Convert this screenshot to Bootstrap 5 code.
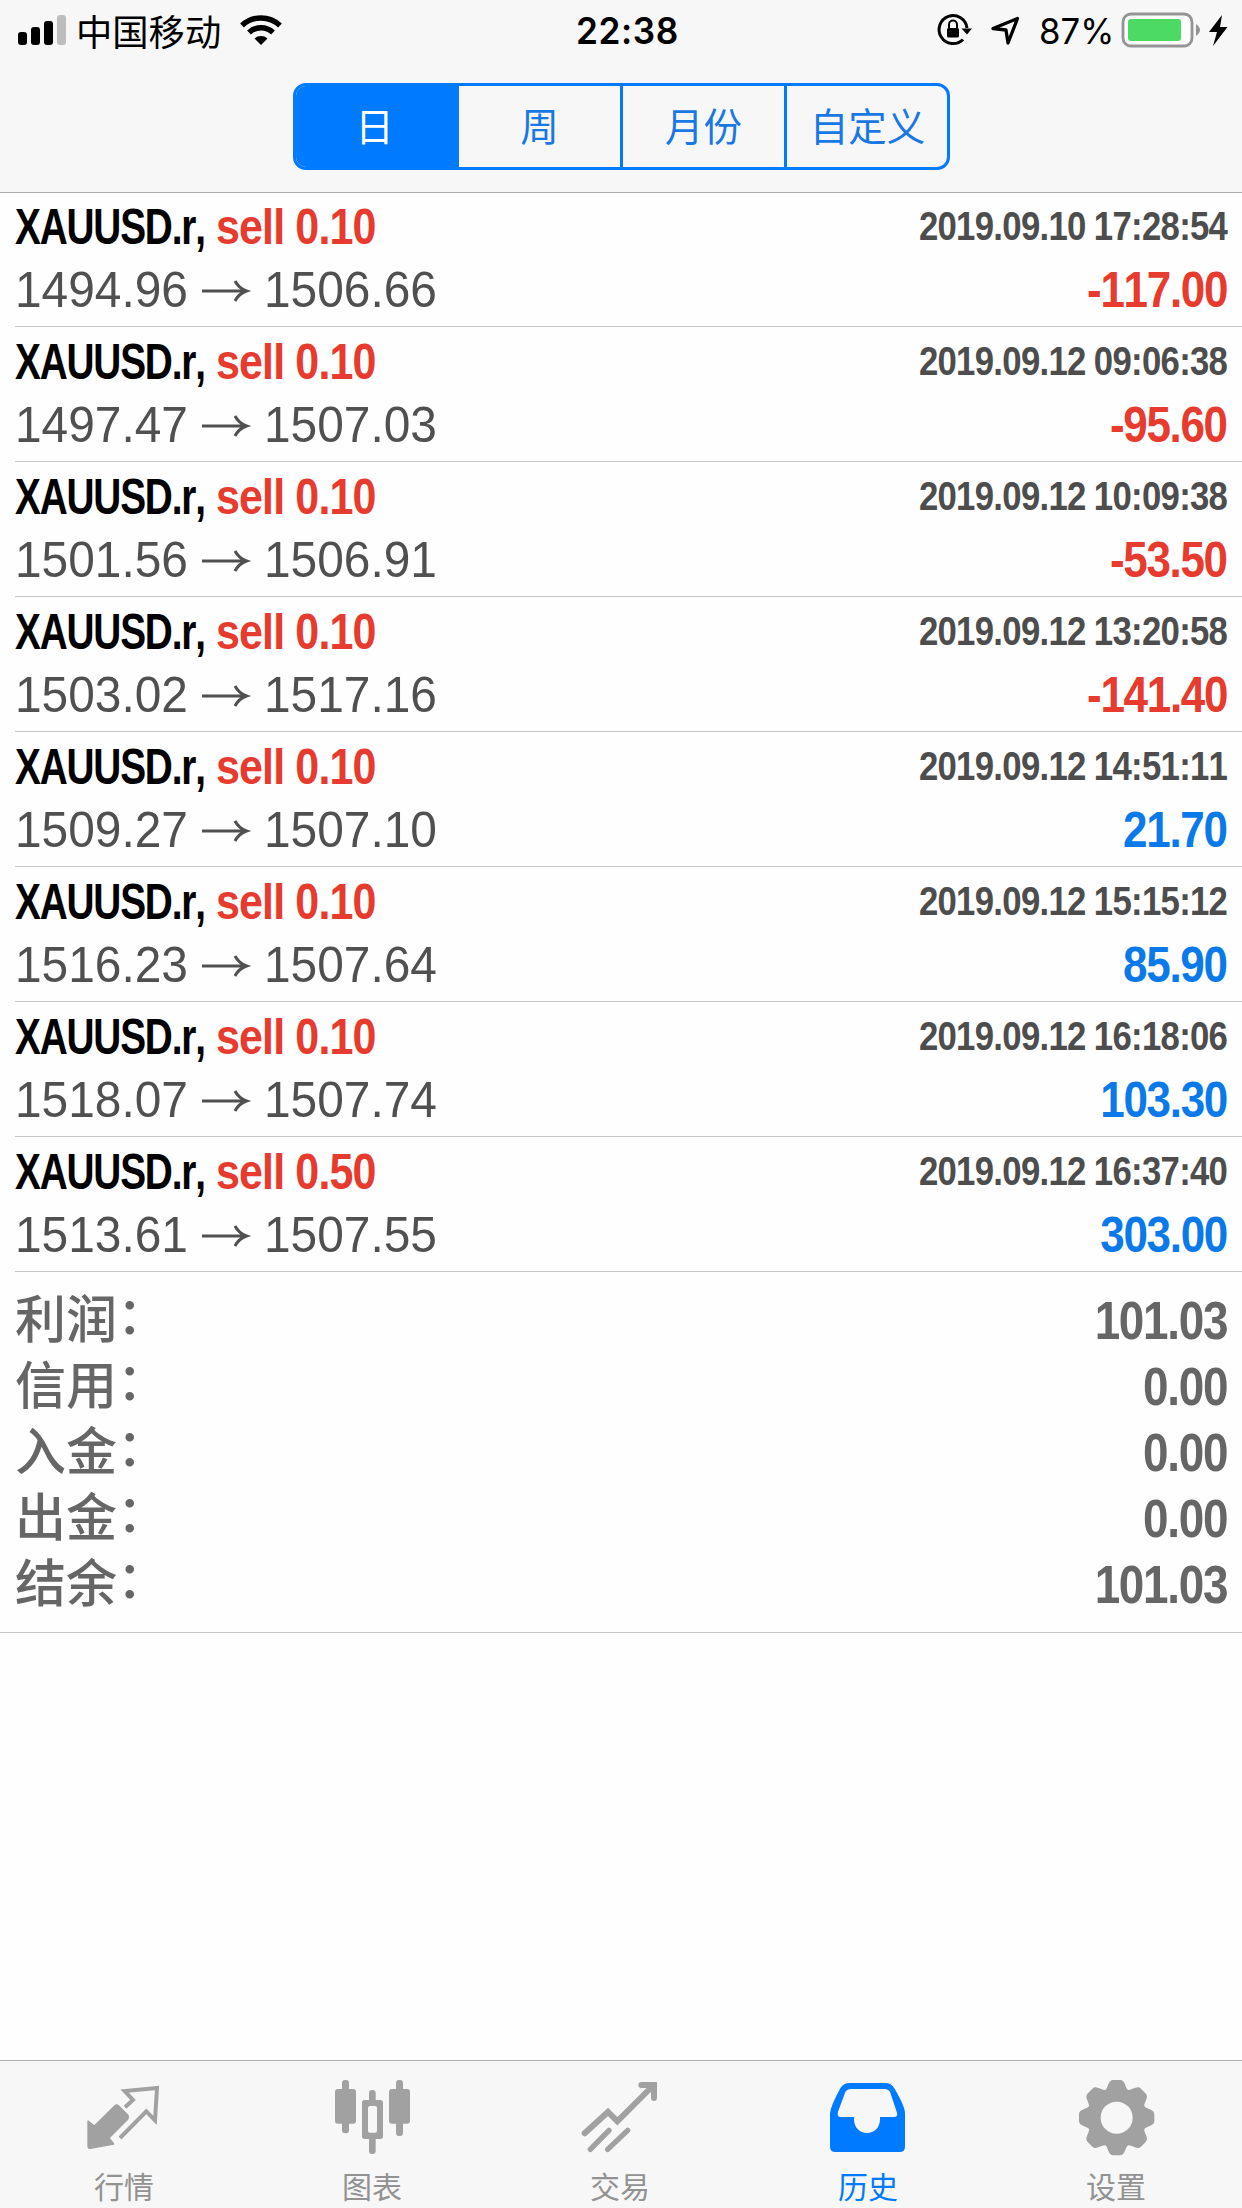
<!DOCTYPE html>
<html lang="zh-CN">
<head>
<meta charset="utf-8">
<meta name="viewport" content="width=device-width, initial-scale=1">
<title>历史</title>
<link rel="stylesheet" href="https://cdn.jsdelivr.net/npm/bootstrap@5.3.0/dist/css/bootstrap.min.css">
<style>
body{width:1242px;height:2208px;overflow:hidden;background:#fefefe;font-family:"Liberation Sans","Noto Sans CJK SC",sans-serif;color:#000}
.topbar{height:193px;background:#f7f7f7;border-bottom:1px solid #adadad;margin-bottom:-1px}
.status{height:83px;font-family:Inter,"Noto Sans CJK SC",sans-serif}
.status>*{flex:none}
.carrier{font:400 36.3px/60px "Noto Sans CJK SC",sans-serif;width:160px;margin-left:8px}
.clock{font-size:36.5px;font-weight:600;line-height:62px;width:465px;padding-left:338px;margin-left:-48px;white-space:nowrap}
.clock span{display:inline-block;letter-spacing:.6px;transform-origin:0 50%;transform:scaleX(.965)}
.status-icons{margin-left:219px}
.battery-text{font-size:36px;line-height:62px;font-weight:400;width:81px;white-space:nowrap}
.battery-text span{display:inline-block;transform-origin:0 50%;transform:translateX(-1px) scaleX(.965)}
.seg{width:657px;height:87px;border:3px solid #007aff;border-radius:13px;overflow:hidden}
.seg .btn{border-radius:0;border:0;border-left:3px solid #007aff;color:#1a78e4;font:400 38.5px/74px "Noto Sans CJK SC",sans-serif;padding:0 0 6px;flex:0 0 165px}
.seg .btn:first-child{border-left:0;flex-basis:161px;padding-right:3px}
.seg .btn.active{background:#007aff;color:#fff}
.deal{height:135px;margin-left:15px;padding:4px 15px 0 0;border-bottom:1px solid #c6c6c6}
.line-a{height:62px;line-height:62px}
.line-b{height:64px;line-height:64px}
.squeeze{display:inline-block;white-space:nowrap;transform-origin:0 50%;font-kerning:none}
.end{transform-origin:100% 50%}
.symbol{width:201px;font-size:50px;font-weight:700}
.symbol .squeeze{transform:scaleX(.775);letter-spacing:-1.5px}
.side{width:200px;font-size:50px;font-weight:700;color:#e63b2e}
.side .squeeze{transform:scaleX(.86);letter-spacing:-1px}
.stamp{font-size:40px;line-height:60px;font-weight:700;color:#4d4d4d}
.stamp .squeeze{transform:scaleX(.868);letter-spacing:-.8px;word-spacing:-1px}
.rate{font-size:50px;color:#505050}
.rate .squeeze{transform:scaleX(.957)}
.from{width:185px}
.arrow{width:64px;height:64px}
.profit{font-size:50px;font-weight:700;color:#0a7aeb}
.loss{color:#e63b2e}
.profit .squeeze{transform:scaleX(.88);letter-spacing:-1.5px}
.summary{padding:12px 15px 17px 15px;height:361px;border-bottom:1px solid #c6c6c6;color:#666}
.sum-line{height:66px;line-height:66px}
.sum-name{font:500 51px/64px "Noto Sans CJK SC",sans-serif}
.colon{display:inline-block;transform:translateY(-4px)}
.sum-value{font-size:53px;line-height:73px;font-weight:700}
.sum-value .squeeze{transform:scaleX(.865);letter-spacing:-1.5px}
.tabs{height:148px;background:#f7f7f7;border-top:1px solid #adadad;width:1242px;padding-right:2px}
.tabs .nav-link{flex:1 1 0;padding:9px 0 0;color:#929292;font:400 30px/44px "Noto Sans CJK SC",sans-serif}
.tabs .nav-link.active{color:#007aff}
.tabs svg{display:block;flex:none;width:100px;height:90px;fill:#a1a1a1;stroke:#a1a1a1}
.tabs .active svg{fill:#007aff;stroke:none}
.tab-label{margin-top:3px}
</style>
<script src="https://cdn.jsdelivr.net/npm/bootstrap@5.3.0/dist/js/bootstrap.bundle.min.js"></script>
</head>
<body class="d-flex flex-column">
<header class="topbar flex-shrink-0 position-relative">
  <div class="status d-flex align-items-start">
    <svg width="68" height="62" viewBox="0 0 68 62"><rect x="18" y="32" width="9" height="13" rx="3"/><rect x="31" y="27" width="9" height="18" rx="3"/><rect x="44" y="21" width="9" height="24" rx="3"/><rect x="57" y="15" width="9" height="30" rx="3" fill="#bdbdbd"/></svg>
    <div class="carrier">中国移动</div>
    <svg width="50" height="62" viewBox="236 0 50 62" fill="none" stroke="#000" stroke-width="5.5"><path d="M242 25.500a27.500 27.500 0 0 1 38 0M249 32.500a17.500 17.500 0 0 1 24 0"/><path d="M254.500 38.500a10 10 0 0 1 13 0L261 45z" fill="#000" stroke="none"/></svg>
    <div class="clock"><span>22:38</span></div>
    <svg class="status-icons" width="118" height="62" viewBox="922 0 118 62" fill="none" stroke="#000" stroke-width="3"><path d="M963 39.500A14 14 0 1 1 967 28"/><path d="M961.500 28.500h10.500l-5 6z" fill="#000" stroke="none"/><rect x="947" y="28" width="12" height="9.500" rx="1.500" fill="#000" stroke="none"/><path d="M949 28v-3.500a4 4 0 0 1 8 0V28" stroke-width="2"/><path d="M993 28.500L1017.500 18.500L1008 43L1006 30z" stroke-width="3.300" stroke-linejoin="round"/></svg>
    <div class="battery-text"><span>87%</span></div>
    <svg width="121" height="62" viewBox="1121 0 121 62"><rect x="1123" y="14" width="69" height="32" rx="8" fill="#fcfcfc" stroke="#949494" stroke-width="2.800"/><rect x="1128" y="19" width="53" height="22" rx="3" fill="#4cd964"/><path d="M1196 24q8 6 0 12z" fill="#949494"/><path d="M1222 15L1209 32H1217L1213 46L1227.500 27H1220z"/></svg>
  </div>
  <div class="seg btn-group d-flex mx-auto" role="group">
    <button class="btn active">日</button><button class="btn">周</button><button class="btn">月份</button><button class="btn">自定义</button>
  </div>
</header>
<svg class="d-none"><symbol id="to" viewBox="0 0 64 64"><path d="M2 33H46M35 23Q39 30.500 46.500 33Q39 35.500 35 43" fill="none" stroke="#505050" stroke-width="3"/></symbol></svg>
<main class="flex-grow-1">
  <section>
    <div class="deal">
      <div class="line-a d-flex"><div class="symbol"><span class="squeeze">XAUUSD.r,</span></div><div class="side"><span class="squeeze">sell 0.10</span></div><div class="stamp ms-auto"><span class="squeeze end">2019.09.10 17:28:54</span></div></div>
      <div class="line-b d-flex"><div class="rate from"><span class="squeeze">1494.96</span></div><svg class="arrow"><use href="#to"/></svg><div class="rate"><span class="squeeze">1506.66</span></div><div class="profit loss ms-auto"><span class="squeeze end">-117.00</span></div></div>
    </div>
    <div class="deal">
      <div class="line-a d-flex"><div class="symbol"><span class="squeeze">XAUUSD.r,</span></div><div class="side"><span class="squeeze">sell 0.10</span></div><div class="stamp ms-auto"><span class="squeeze end">2019.09.12 09:06:38</span></div></div>
      <div class="line-b d-flex"><div class="rate from"><span class="squeeze">1497.47</span></div><svg class="arrow"><use href="#to"/></svg><div class="rate"><span class="squeeze">1507.03</span></div><div class="profit loss ms-auto"><span class="squeeze end">-95.60</span></div></div>
    </div>
    <div class="deal">
      <div class="line-a d-flex"><div class="symbol"><span class="squeeze">XAUUSD.r,</span></div><div class="side"><span class="squeeze">sell 0.10</span></div><div class="stamp ms-auto"><span class="squeeze end">2019.09.12 10:09:38</span></div></div>
      <div class="line-b d-flex"><div class="rate from"><span class="squeeze">1501.56</span></div><svg class="arrow"><use href="#to"/></svg><div class="rate"><span class="squeeze">1506.91</span></div><div class="profit loss ms-auto"><span class="squeeze end">-53.50</span></div></div>
    </div>
    <div class="deal">
      <div class="line-a d-flex"><div class="symbol"><span class="squeeze">XAUUSD.r,</span></div><div class="side"><span class="squeeze">sell 0.10</span></div><div class="stamp ms-auto"><span class="squeeze end">2019.09.12 13:20:58</span></div></div>
      <div class="line-b d-flex"><div class="rate from"><span class="squeeze">1503.02</span></div><svg class="arrow"><use href="#to"/></svg><div class="rate"><span class="squeeze">1517.16</span></div><div class="profit loss ms-auto"><span class="squeeze end">-141.40</span></div></div>
    </div>
    <div class="deal">
      <div class="line-a d-flex"><div class="symbol"><span class="squeeze">XAUUSD.r,</span></div><div class="side"><span class="squeeze">sell 0.10</span></div><div class="stamp ms-auto"><span class="squeeze end">2019.09.12 14:51:11</span></div></div>
      <div class="line-b d-flex"><div class="rate from"><span class="squeeze">1509.27</span></div><svg class="arrow"><use href="#to"/></svg><div class="rate"><span class="squeeze">1507.10</span></div><div class="profit ms-auto"><span class="squeeze end">21.70</span></div></div>
    </div>
    <div class="deal">
      <div class="line-a d-flex"><div class="symbol"><span class="squeeze">XAUUSD.r,</span></div><div class="side"><span class="squeeze">sell 0.10</span></div><div class="stamp ms-auto"><span class="squeeze end">2019.09.12 15:15:12</span></div></div>
      <div class="line-b d-flex"><div class="rate from"><span class="squeeze">1516.23</span></div><svg class="arrow"><use href="#to"/></svg><div class="rate"><span class="squeeze">1507.64</span></div><div class="profit ms-auto"><span class="squeeze end">85.90</span></div></div>
    </div>
    <div class="deal">
      <div class="line-a d-flex"><div class="symbol"><span class="squeeze">XAUUSD.r,</span></div><div class="side"><span class="squeeze">sell 0.10</span></div><div class="stamp ms-auto"><span class="squeeze end">2019.09.12 16:18:06</span></div></div>
      <div class="line-b d-flex"><div class="rate from"><span class="squeeze">1518.07</span></div><svg class="arrow"><use href="#to"/></svg><div class="rate"><span class="squeeze">1507.74</span></div><div class="profit ms-auto"><span class="squeeze end">103.30</span></div></div>
    </div>
    <div class="deal">
      <div class="line-a d-flex"><div class="symbol"><span class="squeeze">XAUUSD.r,</span></div><div class="side"><span class="squeeze">sell 0.50</span></div><div class="stamp ms-auto"><span class="squeeze end">2019.09.12 16:37:40</span></div></div>
      <div class="line-b d-flex"><div class="rate from"><span class="squeeze">1513.61</span></div><svg class="arrow"><use href="#to"/></svg><div class="rate"><span class="squeeze">1507.55</span></div><div class="profit ms-auto"><span class="squeeze end">303.00</span></div></div>
    </div>
  </section>
  <section class="summary">
    <div class="sum-line d-flex justify-content-between"><div class="sum-name">利润<span class="colon">：</span></div><div class="sum-value"><span class="squeeze end">101.03</span></div></div>
    <div class="sum-line d-flex justify-content-between"><div class="sum-name">信用<span class="colon">：</span></div><div class="sum-value"><span class="squeeze end">0.00</span></div></div>
    <div class="sum-line d-flex justify-content-between"><div class="sum-name">入金<span class="colon">：</span></div><div class="sum-value"><span class="squeeze end">0.00</span></div></div>
    <div class="sum-line d-flex justify-content-between"><div class="sum-name">出金<span class="colon">：</span></div><div class="sum-value"><span class="squeeze end">0.00</span></div></div>
    <div class="sum-line d-flex justify-content-between"><div class="sum-name">结余<span class="colon">：</span></div><div class="sum-value"><span class="squeeze end">101.03</span></div></div>
  </section>
</main>
<nav class="tabs nav flex-nowrap flex-shrink-0">
  <a class="nav-link d-flex flex-column align-items-center">
    <svg viewBox="102 60 300 270"><path d="M144 213L163 228L224 168Q230 162 237 169L264 196Q268 202 263 208L207 264L221 282L151 295Q144 296 144 289z" stroke-width="4" stroke-linejoin="round"/><path d="M255 172L279 150L254 123L351 114L345 211L319 184L240 264" fill="none" stroke-width="12"/></svg>
    <span class="tab-label">行情</span></a>
  <a class="nav-link d-flex flex-column align-items-center">
    <svg viewBox="846 60 300 270"><g stroke="none"><rect x="885" y="117" width="63" height="104" rx="9"/><rect x="906" y="90" width="21" height="160" rx="9"/><rect x="1047" y="117" width="63" height="104" rx="9"/><rect x="1068" y="90" width="21" height="168" rx="9"/><rect x="987" y="120" width="20" height="192" rx="9"/><rect x="966" y="150" width="63" height="117" rx="8"/><rect x="984" y="168" width="27" height="80" rx="6" fill="#f7f7f7"/></g></svg>
    <span class="tab-label">图表</span></a>
  <a class="nav-link d-flex flex-column align-items-center">
    <svg viewBox="90 60 300 270"><g fill="none" stroke-width="16" stroke-linecap="round"><path d="M134 250L204 186L232 214L338 108M304 105H342V144" stroke-width="18"/><path d="M151 298L207 241M203 298L263 241"/></g></svg>
    <span class="tab-label">交易</span></a>
  <a class="nav-link active d-flex flex-column align-items-center">
    <svg viewBox="834 60 300 270"><path fill-rule="evenodd" d="M930 99H1036Q1054 99 1063 115Q1095 170 1095 190V290Q1095 306 1079 306H886Q870 306 870 290V190Q872 168 901 115Q910 99 930 99zM933 117Q921 117 916 126L894 185Q890 201 902 201H942V208C942 234 960 249 981 249C1002 249 1020 234 1020 208V201H1061Q1076 201 1070 185L1051 128Q1047 117 1033 117z"/></svg>
    <span class="tab-label">历史</span></a>
  <a class="nav-link d-flex flex-column align-items-center">
    <svg viewBox="78 60 300 270"><g transform="translate(230 203)" stroke="none"><circle r="86"/><g id="cogs"><path id="cog" d="M-48 -72L-34 -83C-25 -90 -26 -113 -10 -113H10C26 -113 25 -90 34 -83L48 -72z"/><use href="#cog" transform="rotate(45)"/><use href="#cog" transform="rotate(90)"/><use href="#cog" transform="rotate(135)"/></g><use href="#cogs" transform="rotate(180)"/><circle r="48" fill="#f7f7f7"/></g></svg>
    <span class="tab-label">设置</span></a>
</nav>
</body>
</html>
